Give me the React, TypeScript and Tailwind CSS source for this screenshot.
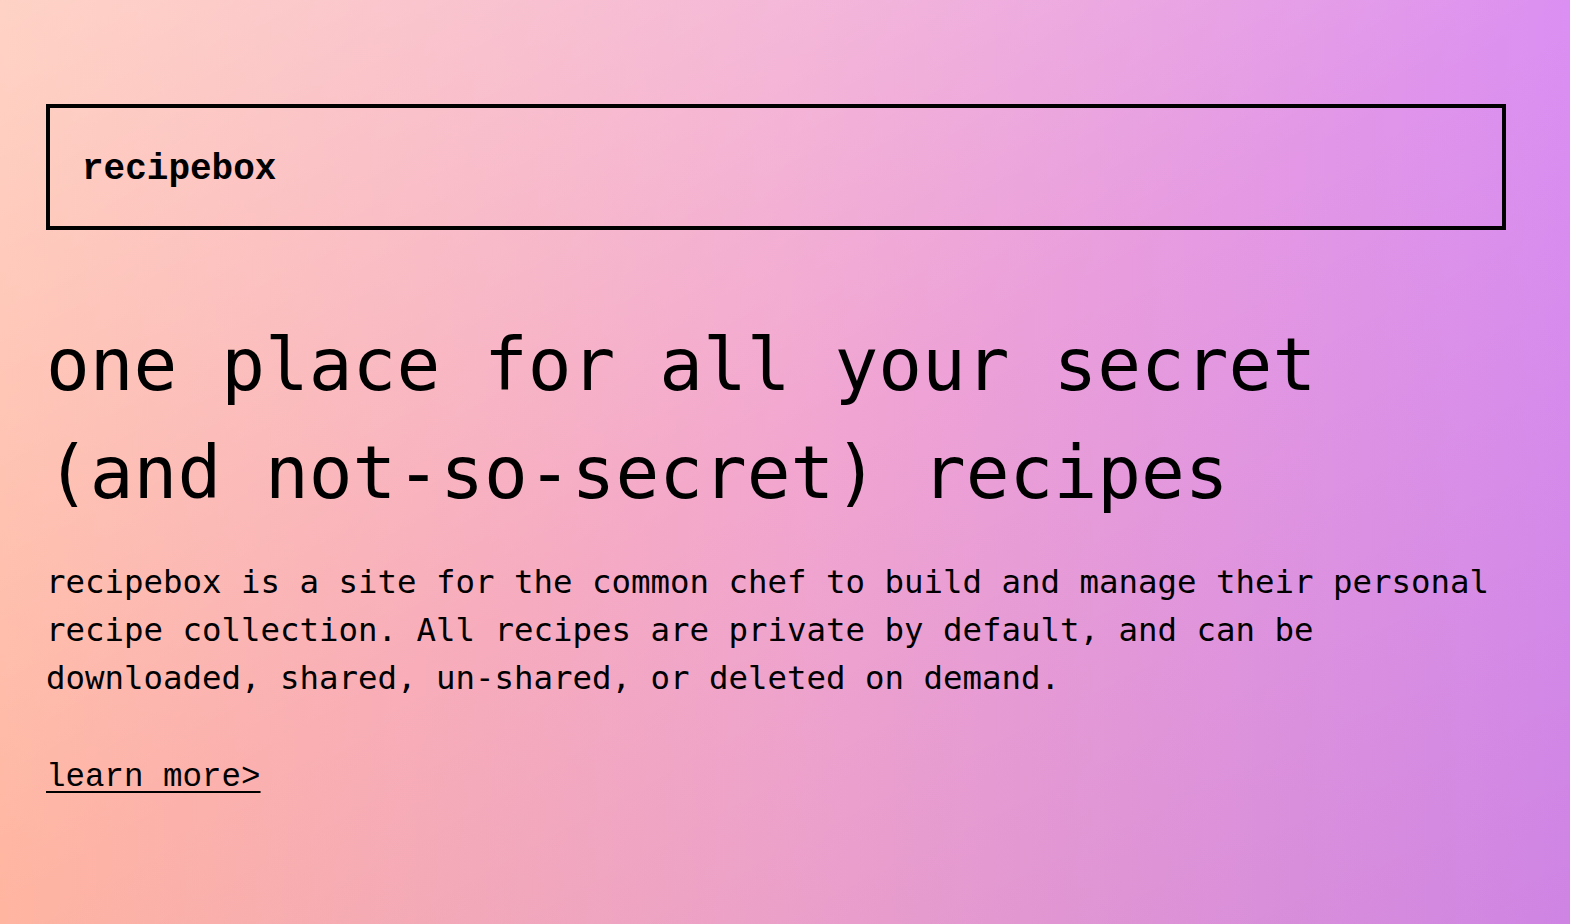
const Navbar: React.FC = () => {
  return (
    <nav className="h-[126px] w-full flex items-center border-4 border-black pl-[32px] pt-[5px]">
      <span className="font-['Liberation_Mono',monospace] font-bold text-[36px] leading-none text-black">
        recipebox
      </span>
    </nav>
  )
}

const Hero: React.FC = () => {
  return (
    <section className="flex flex-col">
      <h1 className="mt-[81px] font-['DejaVu_Sans_Mono',monospace] text-[72.75px] leading-[108px] font-normal text-black">
        one place for all your secret (and not-so-secret) recipes
      </h1>
      <p className="mt-[31px] font-['DejaVu_Sans_Mono',monospace] text-[32.4px] leading-[48px] text-black">
        recipebox is a site for the common chef to build and manage their personal recipe
        collection. All recipes are private by default, and can be downloaded, shared,
        un-shared, or deleted on demand.
      </p>
      <a
        href="#"
        className="mt-[52px] self-start font-['Liberation_Mono',monospace] text-[32.5px] leading-[48px] text-black underline underline-offset-[5px] decoration-2"
      >
        learn more&gt;
      </a>
    </section>
  )
}

export default function App() {
  return (
    <div className="min-h-screen w-full bg-[linear-gradient(150deg,rgba(255,255,255,0.4)_0%,rgba(255,255,255,0)_50%,rgba(60,0,60,0.08)_100%),linear-gradient(to_right,#ffb5a0,#f2a6cf_50%,#db8ff2)]">
      <div className="w-[1460px] ml-[46px] pt-[104px]">
        <Navbar />
        <Hero />
      </div>
    </div>
  )
}
